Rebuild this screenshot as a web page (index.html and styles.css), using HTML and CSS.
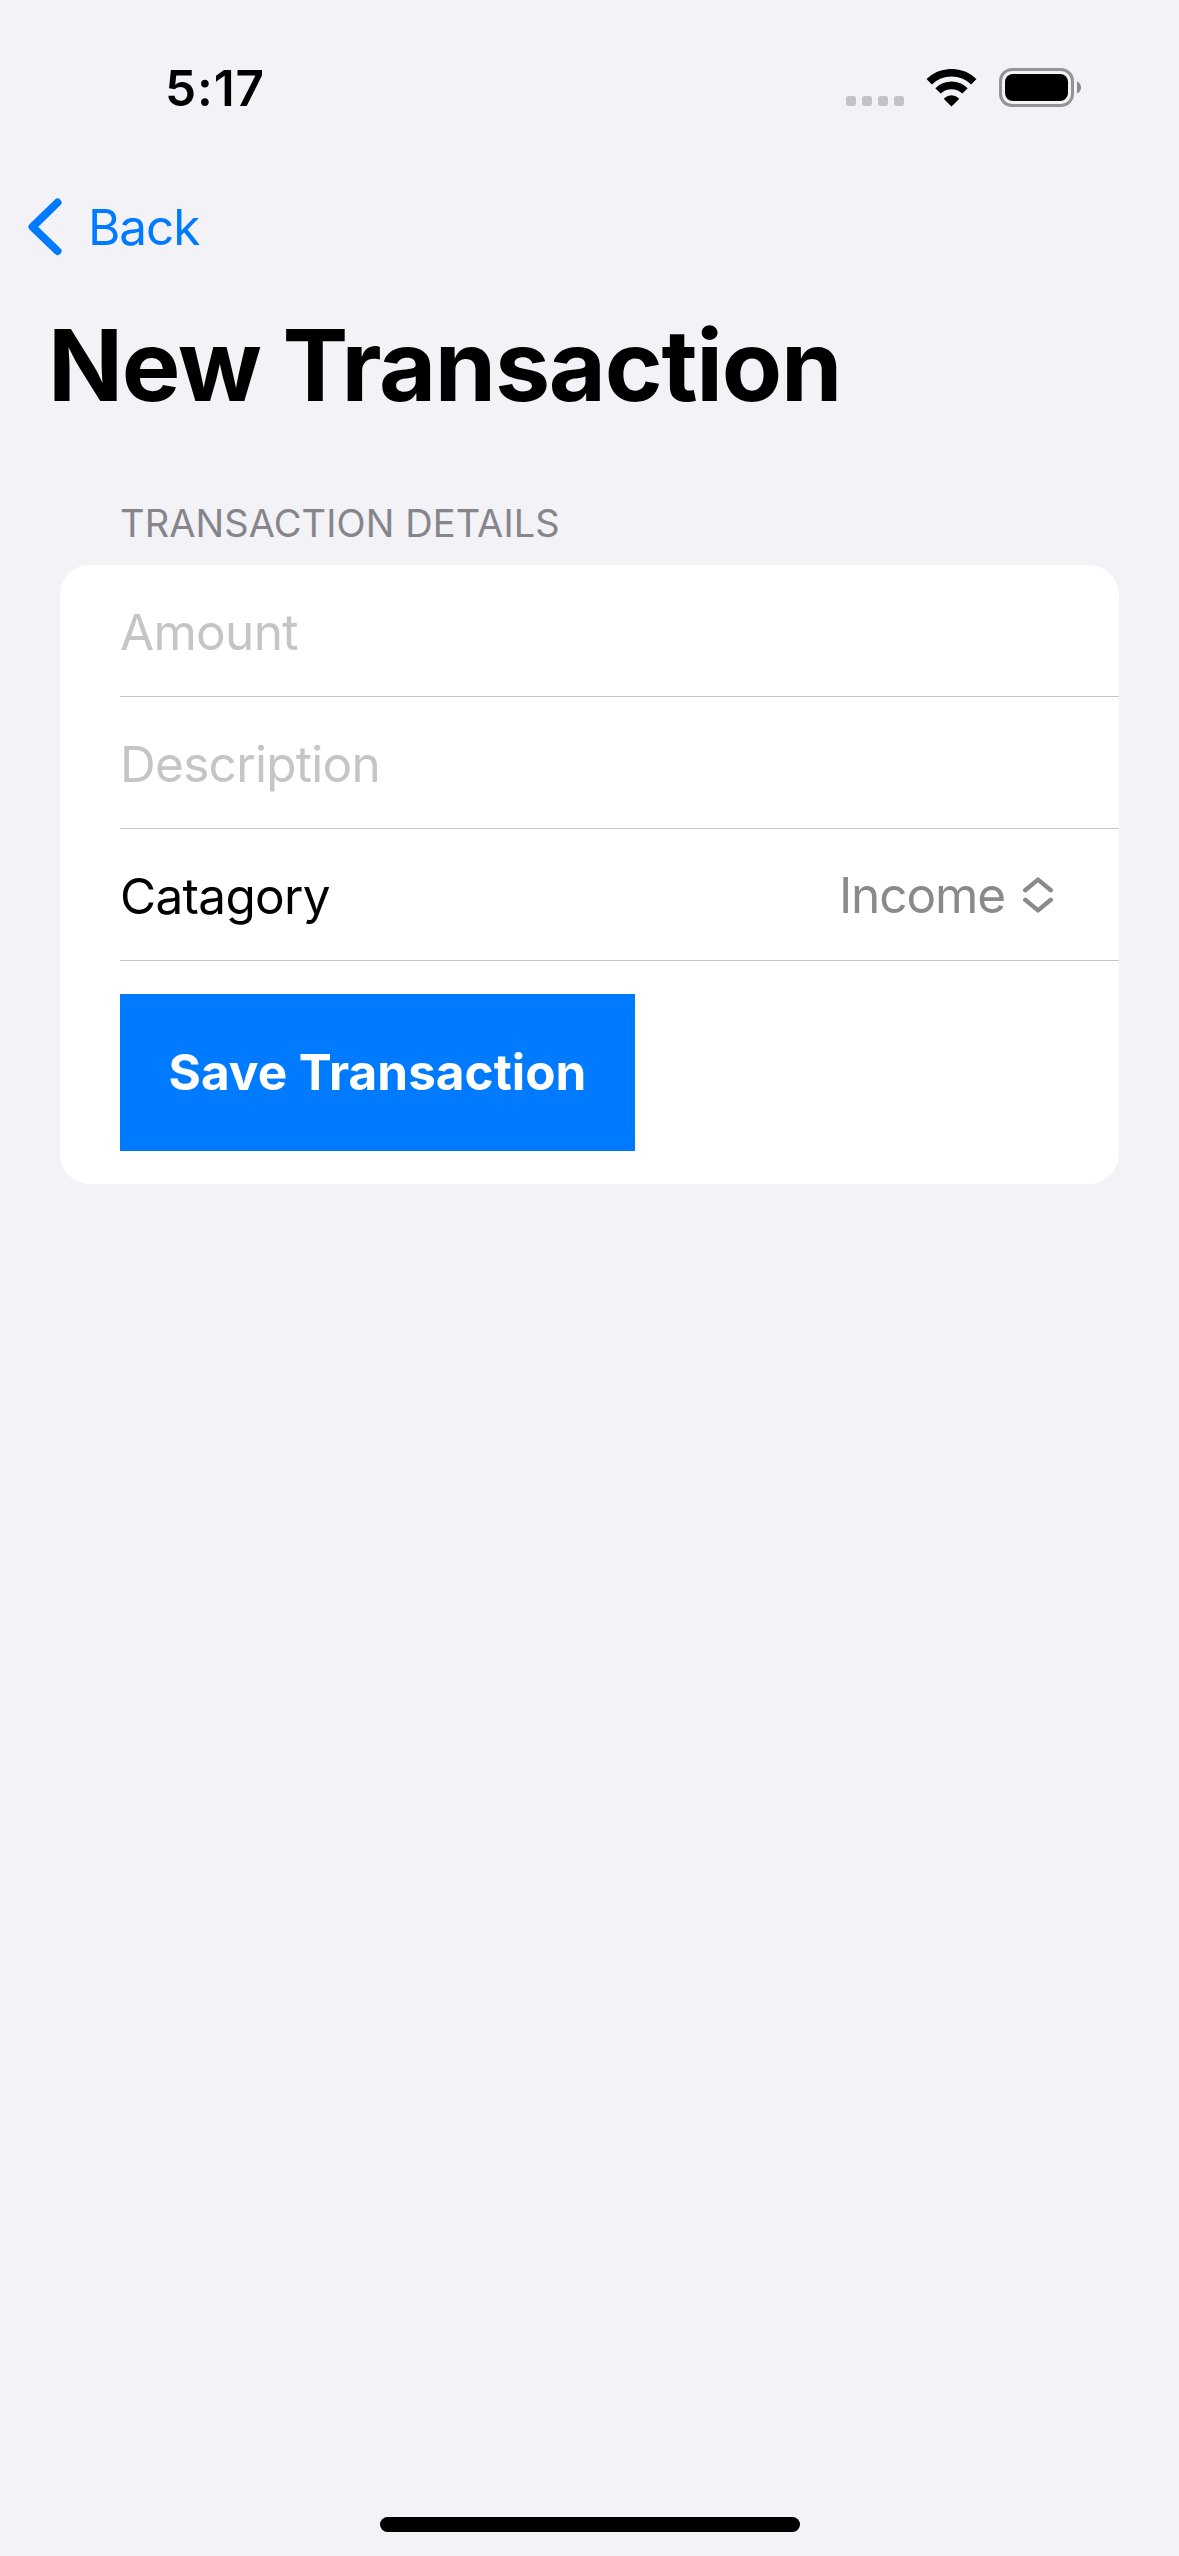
FILE: index.html
```html
<!DOCTYPE html>
<html lang="en">
<head>
<meta charset="utf-8">
<title>New Transaction</title>
<link rel="stylesheet" href="styles.css">
</head>
<body>
<div class="screen">
  <header class="status-bar">
    <span class="time">5:17</span>
    <div class="indicators">
      <div class="cellular"><i class="dot"></i><i class="dot"></i><i class="dot"></i><i class="dot"></i></div>
      <svg class="wifi" width="51" height="38" viewBox="0 0 51 38">
        <path d="M3.2 12.8A32 32 0 0 1 47.8 12.8" fill="none" stroke="#000" stroke-width="7.6"/>
        <path d="M12 21.9A19.2 19.2 0 0 1 39 21.9" fill="none" stroke="#000" stroke-width="7.6"/>
        <path d="M25.5 37.6L18.4 30.6Q17.6 29.8 18.5 29A10.4 10.4 0 0 1 32.5 29Q33.4 29.8 32.6 30.6Z"/>
      </svg>
      <svg class="battery" width="82" height="39" viewBox="0 0 82 39">
        <rect x="1.5" y="1.5" width="72" height="36" rx="11.5" fill="none" stroke="#949496" stroke-width="3"/>
        <rect x="6" y="6" width="63" height="27" rx="8"/>
        <path d="M78 13.2Q82 15.4 82 19.4T78 25.6Z" fill="#8a8a8c"/>
      </svg>
    </div>
  </header>
  <nav class="nav-bar">
    <a class="back">
      <svg width="34" height="58" viewBox="0 0 34 58"><path d="M29.5 4.5L4.5 28.8L29.5 53" fill="none" stroke="#007aff" stroke-width="8" stroke-linecap="round" stroke-linejoin="round"/></svg>
      <span class="back-label">Back</span>
    </a>
  </nav>
  <h1 class="title">New Transaction</h1>
  <main class="form">
    <h2 class="section-title">TRANSACTION DETAILS</h2>
    <section class="card">
      <div class="row"><span class="placeholder">Amount</span></div>
      <div class="row"><span class="placeholder">Description</span></div>
      <div class="row">
        <span class="label">Catagory</span>
        <div class="picker">
          <span class="value">Income</span>
          <svg width="30" height="36" viewBox="0 0 30 36"><path d="M2.2 13.2L15 2.6L27.8 13.2M2.2 22.8L15 33.4L27.8 22.8" fill="none" stroke="#8a8a8e" stroke-width="4.4" stroke-linecap="round" stroke-linejoin="round"/></svg>
        </div>
      </div>
      <div class="action"><button class="save">Save Transaction</button></div>
    </section>
  </main>
  <footer class="home"><div class="home-indicator"></div></footer>
</div>
</body>
</html>
```
FILE: styles.css
```css
* { box-sizing: border-box; }
body { margin: 0; background: #f2f2f7; }
.screen {
  display: flex;
  flex-direction: column;
  width: 1179px;
  height: 2556px;
  background: #f2f2f7;
  color: #000;
  font-family: Inter, "Liberation Sans", sans-serif;
  font-size: 49.5px;
  line-height: 60px;
  white-space: nowrap;
}
.status-bar {
  display: flex;
  justify-content: space-between;
  height: 177px;
  padding: 58px 98px 0 165px;
}
.time { font-weight: 600; letter-spacing: 0.9px; }
.indicators { display: flex; align-items: flex-start; padding-top: 10px; }
.cellular { display: flex; gap: 6px; padding-top: 28px; margin-right: 22px; }
.dot { width: 10px; height: 10px; border-radius: 3px; background: #c3c2c8; }
.wifi { margin: 1px 22px 0 0; }
.nav-bar { height: 132px; padding: 20px 0 0 28px; color: #007aff; }
.back { display: flex; align-items: center; gap: 26px; width: max-content; letter-spacing: -1.1px; }
.title {
  height: 191px;
  margin: 0;
  padding: 6px 0 0 48px;
  font-size: 98.6px;
  line-height: 100px;
  font-weight: 700;
  letter-spacing: -1.3px;
}
.form { flex: 1; padding: 0 60px; }
.section-title {
  height: 65px;
  margin: 0;
  padding-left: 60px;
  font-size: 38px;
  line-height: 46px;
  font-weight: 400;
  letter-spacing: 0.1px;
  color: #85858b;
}
.card {
  border-radius: 30px;
  background: #fff;
  overflow: hidden;
}
.row {
  display: flex;
  align-items: center;
  justify-content: space-between;
  height: 132px;
  margin-left: 60px;
  padding: 3px 66px 0 0;
  border-bottom: 1px solid #c6c6c8;
  letter-spacing: -0.7px;
}
.placeholder { color: #c5c5c7; }
.picker {
  display: flex;
  align-items: center;
  gap: 18px;
  padding-bottom: 2px;
  letter-spacing: -1.1px;
  color: #8a8a8e;
}
.action { padding: 33px 60px; }
.save {
  display: block;
  width: 515px;
  height: 157px;
  padding: 0 0 1px;
  border: 0;
  background: #007aff;
  color: #fff;
  font: inherit;
  font-weight: 700;
}
.home { display: flex; justify-content: center; height: 39px; }
.home-indicator { width: 420px; height: 15px; border-radius: 8px; background: #000; }
```
